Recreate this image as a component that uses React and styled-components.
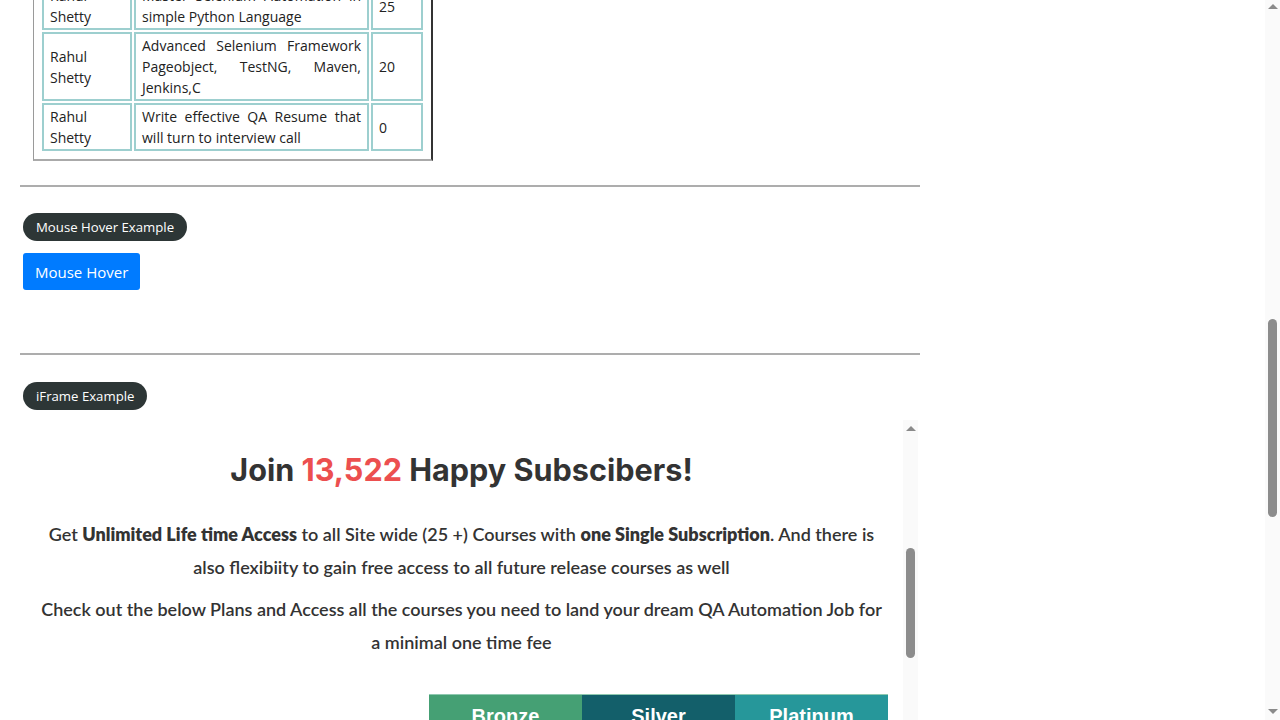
import React from 'react';
import styled, { createGlobalStyle } from 'styled-components';

const GlobalStyle = createGlobalStyle`
  html, body {
    margin: 0;
    padding: 0;
    overflow: hidden;
    background: #fff;
  }
`;

const courses = [
  { instructor: 'Rahul Shetty', course: 'Master Selenium Automation in simple Python Language', price: '25' },
  { instructor: 'Rahul Shetty', course: 'Advanced Selenium Framework Pageobject, TestNG, Maven, Jenkins,C', price: '20' },
  { instructor: 'Rahul Shetty', course: 'Write effective QA Resume that will turn to interview call', price: '0' },
];

const plans = [
  { name: 'Bronze', color: '#45a074' },
  { name: 'Silver', color: '#135f6a' },
  { name: 'Platinum', color: '#26979a' },
];

const App = () => {
  return (
    <>
      <GlobalStyle />
      <Window>
        <Viewport>
          <Content>
            <TableBox>
              <CourseTable>
                <tbody>
                  {courses.map((c, i) => (
                    <tr key={i}>
                      <NameCell>{c.instructor}</NameCell>
                      <CourseCell>{c.course}</CourseCell>
                      <PriceCell>{c.price}</PriceCell>
                    </tr>
                  ))}
                </tbody>
              </CourseTable>
            </TableBox>
            <Rule />
            <Section>
              <Legend>Mouse Hover Example</Legend>
              <HoverButton>Mouse Hover</HoverButton>
            </Section>
            <Rule />
            <IframeSection>
              <Legend>iFrame Example</Legend>
              <Frame>
                <FrameBody>
                  <Heading>Join <Count>13,522</Count> Happy Subscibers!</Heading>
                  <Lead>
                    Get <b>Unlimited Life time Access</b> to all Site wide (25 +) Courses with <b>one Single Subscription</b>. And there is also flexibiity to gain free access to all future release courses as well
                  </Lead>
                  <Lead>
                    Check out the below Plans and Access all the courses you need to land your dream QA Automation Job for a minimal one time fee
                  </Lead>
                  <Plans>
                    {plans.map((p) => (
                      <PlanHead key={p.name} $bg={p.color}>{p.name}</PlanHead>
                    ))}
                  </Plans>
                </FrameBody>
                <Scrollbar $top={6} $thumbTop={128} $thumbHeight={110}>
                  <ArrowUp />
                </Scrollbar>
              </Frame>
            </IframeSection>
          </Content>
        </Viewport>
        <PageScrollbar>
          <ArrowUp />
          <Track>
            <Thumb style={{ top: 310, height: 198 }} />
          </Track>
          <ArrowDown />
        </PageScrollbar>
      </Window>
    </>
  );
};

const Window = styled.div`
  display: flex;
  width: 1280px;
  height: 720px;
  overflow: hidden;
`;

const Viewport = styled.div`
  flex: 1;
  height: 720px;
  overflow: hidden;
`;

const Content = styled.div`
  width: 900px;
  margin-left: 20px;
  margin-top: -26px;
  font-family: "Open Sans", "DejaVu Sans", sans-serif;
`;

const TableBox = styled.div`
  width: 385px;
  margin-left: 13px;
  padding: 6px 6px 6px 6px;
  border-left: 1px solid #9a9a9a;
  border-right: 2px solid #333;
  border-bottom: 2px solid #aaa;
`;

const CourseTable = styled.table`
  border-collapse: separate;
  border-spacing: 2px;
  font-size: 14px;
  line-height: 21px;
  color: #222;
  font-family: "Open Sans", "DejaVu Sans", sans-serif;
`;

const Cell = styled.td`
  border: 2px solid #9dcfcf;
  padding: 1px 6px;
  vertical-align: middle;
`;

const NameCell = styled(Cell)`
  width: 74px;
`;

const CourseCell = styled(Cell)`
  width: 219px;
  text-align: justify;
`;

const PriceCell = styled(Cell)`
  width: 36px;
`;

const Rule = styled.hr`
  margin: 24px 0 0;
  border: none;
  border-top: 2px solid #adadad;
`;

const Section = styled.div`
  display: flex;
  flex-direction: column;
  align-items: flex-start;
  gap: 12px;
  padding: 26px 3px 39px;
`;

const Legend = styled.span`
  background: #2d3636;
  color: #fff;
  font-size: 13.2px;
  line-height: 28px;
  height: 28px;
  padding: 0 13px;
  border-radius: 14px;
`;

const HoverButton = styled.button`
  background: #007bff;
  color: #fff;
  border: none;
  border-radius: 3px;
  font-family: "Open Sans", "DejaVu Sans", sans-serif;
  font-size: 15px;
  height: 37px;
  padding: 0 12px;
`;

const IframeSection = styled.div`
  display: flex;
  flex-direction: column;
  align-items: flex-start;
  padding-top: 27px;
  gap: 10px;
  & > span {
    margin-left: 3px;
  }
`;

const Frame = styled.div`
  display: flex;
  width: 898px;
  height: 320px;
`;

const FrameBody = styled.div`
  flex: 1;
  font-family: Lato, "Open Sans", sans-serif;
  color: #333;
  text-align: center;
  padding-top: 30px;
`;

const Heading = styled.h1`
  margin: 0 0 28px;
  font-family: Inter, "Open Sans", sans-serif;
  font-weight: 700;
  font-size: 30.6px;
  line-height: 40px;
  color: #333;
`;

const Count = styled.span`
  color: #ec4f4f;
`;

const Lead = styled.p`
  margin: 0 0 9px;
  padding: 0 16px;
  font-size: 18px;
  line-height: 33px;
  font-weight: 600;
  b {
    font-weight: 800;
  }
`;

const Plans = styled.div`
  display: flex;
  margin: 35px 0 0 409px;
`;

const PlanHead = styled.div`
  width: 153px;
  height: 60px;
  background: ${({ $bg }) => $bg};
  border-top: 1px solid #8fc9b0;
  color: #fff;
  font-family: "Liberation Sans", Arial, sans-serif;
  font-weight: 700;
  font-size: 20px;
  padding-top: 10px;
  box-sizing: border-box;
`;

const Scrollbar = styled.div`
  position: relative;
  width: 15px;
  background: #fafafa;
  display: flex;
  justify-content: center;
  padding-top: ${({ $top }) => $top}px;
  box-sizing: border-box;
  &::after {
    content: '';
    position: absolute;
    left: 3px;
    width: 9px;
    top: ${({ $thumbTop }) => $thumbTop}px;
    height: ${({ $thumbHeight }) => $thumbHeight}px;
    background: #8c8c8c;
    border-radius: 5px;
  }
`;

const PageScrollbar = styled.div`
  width: 15px;
  height: 720px;
  background: #fafafa;
  display: flex;
  flex-direction: column;
  align-items: center;
  padding: 4px 0 6px;
  box-sizing: border-box;
`;

const Track = styled.div`
  position: relative;
  flex: 1;
  width: 100%;
`;

const Thumb = styled.div`
  position: absolute;
  left: 3px;
  width: 9px;
  background: #8c8c8c;
  border-radius: 5px;
`;

const ArrowUp = styled.div`
  width: 0;
  height: 0;
  border-left: 5px solid transparent;
  border-right: 5px solid transparent;
  border-bottom: 5px solid #8a8a8a;
`;

const ArrowDown = styled.div`
  width: 0;
  height: 0;
  border-left: 5px solid transparent;
  border-right: 5px solid transparent;
  border-top: 5px solid #8a8a8a;
`;

export default App;
